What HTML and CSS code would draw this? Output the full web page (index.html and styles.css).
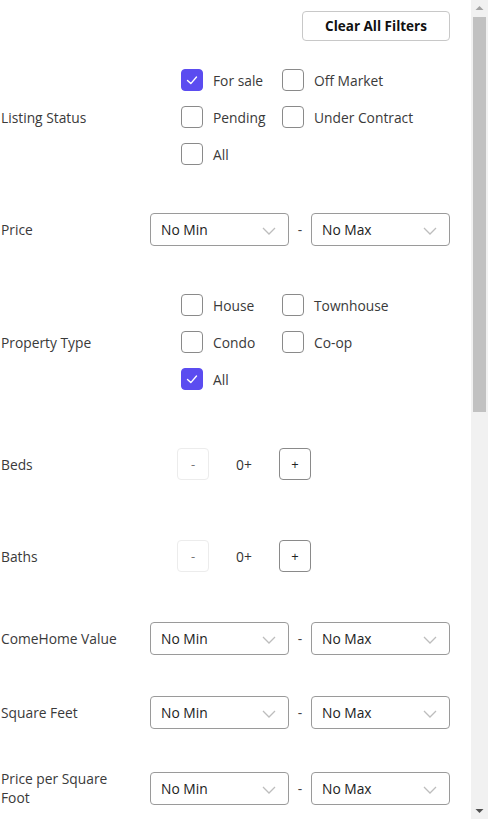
FILE: index.html
```html
<!DOCTYPE html>
<html>
<head>
<meta charset="utf-8">
<link rel="stylesheet" href="styles.css">
</head>
<body>
<div class="frame">
  <main class="filters">
    <div class="header">
      <button class="clear-btn">Clear All Filters</button>
    </div>

    <div class="row row-listing">
      <div class="label">Listing Status</div>
      <div class="checks">
        <label class="check"><span class="box checked"><svg viewBox="0 0 22 22" width="22" height="22"><polyline points="6.5,11.5 9.8,14.6 15.5,8" fill="none" stroke="#fff" stroke-width="1.4" stroke-linecap="round" stroke-linejoin="round"/></svg></span>For sale</label>
        <label class="check"><span class="box"></span>Off Market</label>
        <label class="check"><span class="box"></span>Pending</label>
        <label class="check"><span class="box"></span>Under Contract</label>
        <label class="check"><span class="box"></span>All</label>
      </div>
    </div>

    <div class="row row-price">
      <div class="label">Price</div>
      <div class="range">
        <div class="select">No Min<svg class="chev" viewBox="0 0 14 8" width="14" height="8"><polyline points="1,1 7,7 13,1" fill="none" stroke="#bdbdbd" stroke-width="1.3"/></svg></div>
        <span class="dash">-</span>
        <div class="select">No Max<svg class="chev" viewBox="0 0 14 8" width="14" height="8"><polyline points="1,1 7,7 13,1" fill="none" stroke="#bdbdbd" stroke-width="1.3"/></svg></div>
      </div>
    </div>

    <div class="row row-type">
      <div class="label">Property Type</div>
      <div class="checks">
        <label class="check"><span class="box"></span>House</label>
        <label class="check"><span class="box"></span>Townhouse</label>
        <label class="check"><span class="box"></span>Condo</label>
        <label class="check"><span class="box"></span>Co-op</label>
        <label class="check"><span class="box checked"><svg viewBox="0 0 22 22" width="22" height="22"><polyline points="6.5,11.5 9.8,14.6 15.5,8" fill="none" stroke="#fff" stroke-width="1.4" stroke-linecap="round" stroke-linejoin="round"/></svg></span>All</label>
      </div>
    </div>

    <div class="row row-beds">
      <div class="label">Beds</div>
      <div class="counter">
        <button class="step step-off">-</button>
        <span class="count">0+</span>
        <button class="step">+</button>
      </div>
    </div>

    <div class="row row-baths">
      <div class="label">Baths</div>
      <div class="counter">
        <button class="step step-off">-</button>
        <span class="count">0+</span>
        <button class="step">+</button>
      </div>
    </div>

    <div class="row row-value">
      <div class="label">ComeHome Value</div>
      <div class="range">
        <div class="select">No Min<svg class="chev" viewBox="0 0 14 8" width="14" height="8"><polyline points="1,1 7,7 13,1" fill="none" stroke="#bdbdbd" stroke-width="1.3"/></svg></div>
        <span class="dash">-</span>
        <div class="select">No Max<svg class="chev" viewBox="0 0 14 8" width="14" height="8"><polyline points="1,1 7,7 13,1" fill="none" stroke="#bdbdbd" stroke-width="1.3"/></svg></div>
      </div>
    </div>

    <div class="row row-sqft">
      <div class="label">Square Feet</div>
      <div class="range">
        <div class="select">No Min<svg class="chev" viewBox="0 0 14 8" width="14" height="8"><polyline points="1,1 7,7 13,1" fill="none" stroke="#bdbdbd" stroke-width="1.3"/></svg></div>
        <span class="dash">-</span>
        <div class="select">No Max<svg class="chev" viewBox="0 0 14 8" width="14" height="8"><polyline points="1,1 7,7 13,1" fill="none" stroke="#bdbdbd" stroke-width="1.3"/></svg></div>
      </div>
    </div>

    <div class="row row-ppsf">
      <div class="label">Price per Square Foot</div>
      <div class="range">
        <div class="select">No Min<svg class="chev" viewBox="0 0 14 8" width="14" height="8"><polyline points="1,1 7,7 13,1" fill="none" stroke="#bdbdbd" stroke-width="1.3"/></svg></div>
        <span class="dash">-</span>
        <div class="select">No Max<svg class="chev" viewBox="0 0 14 8" width="14" height="8"><polyline points="1,1 7,7 13,1" fill="none" stroke="#bdbdbd" stroke-width="1.3"/></svg></div>
      </div>
    </div>
  </main>

  <div class="scrollbar">
    <div class="sb-btn"><svg viewBox="0 0 17 17" width="17" height="17"><polygon points="4.5,10 12.5,10 8.5,6" fill="#a3a3a3"/></svg></div>
    <div class="sb-track">
      <div class="sb-thumb"></div>
    </div>
    <div class="sb-btn"><svg viewBox="0 0 17 17" width="17" height="17"><polygon points="4.5,7 12.5,7 8.5,11" fill="#505050"/></svg></div>
  </div>
</div>
</body>
</html>
```

FILE: styles.css
```css
* { box-sizing: border-box; }

html, body {
  margin: 0;
  padding: 0;
  height: 819px;
  overflow: hidden;
  background: #fff;
}

body {
  font-family: "Open Sans", "Noto Sans", sans-serif;
  font-size: 13.8px;
  color: #3a3a3a;
}

.frame {
  display: flex;
  height: 819px;
}

.filters {
  width: 471px;
  flex: none;
  padding: 11px 21px 0 0;
  overflow: hidden;
}

.header {
  display: flex;
  justify-content: flex-end;
}

.clear-btn {
  width: 148px;
  height: 30px;
  border: 1px solid #c8c8c8;
  border-radius: 4px;
  background: #fff;
  font-family: inherit;
  font-size: 13.5px;
  font-weight: 700;
  color: #111;
  padding: 0;
}

.row {
  display: flex;
  align-items: center;
}

.label {
  width: 150px;
  flex: none;
  padding-right: 30px;
  line-height: 19px;
  padding-left: 1px;
}

.row-listing { margin-top: 28px; }
.row-price { margin-top: 48px; }
.row-type { margin-top: 48px; }
.row-beds { margin-top: 58px; }
.row-baths { margin-top: 60px; }
.row-value { margin-top: 50px; }
.row-sqft { margin-top: 41px; }
.row-ppsf { margin-top: 40px; }

.checks {
  display: grid;
  grid-template-columns: 101px auto;
  row-gap: 15px;
  margin-left: 31px;
}

.check {
  display: flex;
  align-items: center;
  gap: 10px;
  height: 22px;
  white-space: nowrap;
}

.box {
  width: 22px;
  height: 22px;
  flex: none;
  border: 1px solid #8a8a8a;
  border-radius: 4px;
  background: #fff;
  display: flex;
}

.box.checked {
  background: #5b4cf0;
  border-color: #5b4cf0;
}

.box.checked svg {
  margin: -1px;
}

.range {
  display: flex;
  align-items: center;
}

.select {
  width: 139px;
  height: 33px;
  border: 1px solid #9a9a9a;
  border-radius: 4px;
  display: flex;
  align-items: center;
  justify-content: space-between;
  padding: 0 12px 0 10px;
  color: #222;
}

.chev {
  margin-top: 3px;
}

.dash {
  width: 22px;
  text-align: center;
  color: #444;
}

.counter {
  display: flex;
  align-items: center;
  margin-left: 27px;
}

.step {
  width: 32px;
  height: 32px;
  border: 1px solid #8a8a8a;
  border-radius: 4px;
  background: #fff;
  font-family: inherit;
  font-size: 13px;
  color: #222;
  padding: 0;
}

.step-off {
  border-color: #ececec;
  color: #777;
}

.count {
  width: 70px;
  text-align: center;
  color: #333;
}

.scrollbar {
  width: 17px;
  flex: none;
  background: #f1f1f1;
  display: flex;
  flex-direction: column;
}

.sb-btn {
  height: 17px;
  flex: none;
  display: flex;
}

.sb-track {
  flex: 1;
  padding: 0 2px;
}

.sb-thumb {
  height: 395px;
  background: #c1c1c1;
}
```
